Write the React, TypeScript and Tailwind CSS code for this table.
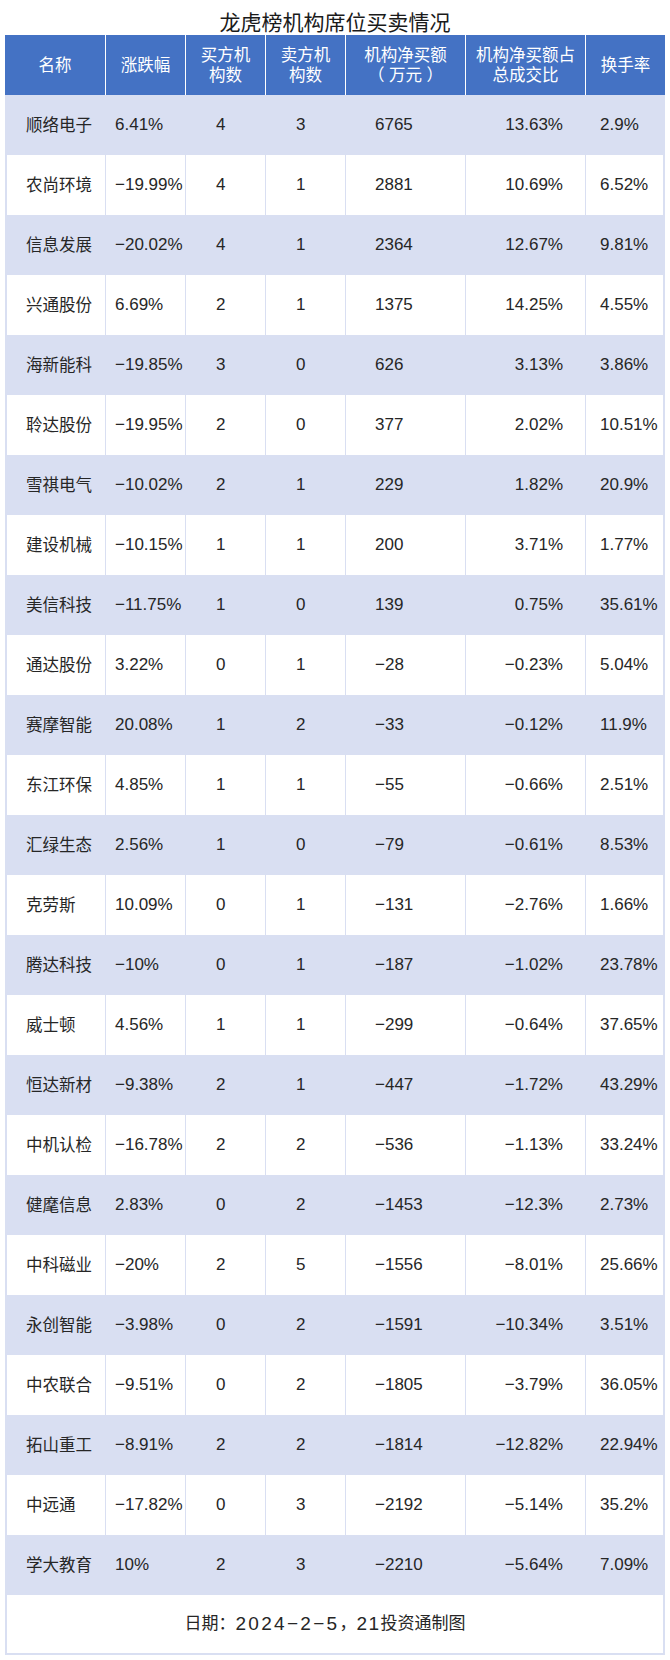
const rows: string[][] = [
  ["顺络电子", "6.41%", "4", "3", "6765", "13.63%", "2.9%"],
  ["农尚环境", "−19.99%", "4", "1", "2881", "10.69%", "6.52%"],
  ["信息发展", "−20.02%", "4", "1", "2364", "12.67%", "9.81%"],
  ["兴通股份", "6.69%", "2", "1", "1375", "14.25%", "4.55%"],
  ["海新能科", "−19.85%", "3", "0", "626", "3.13%", "3.86%"],
  ["聆达股份", "−19.95%", "2", "0", "377", "2.02%", "10.51%"],
  ["雪祺电气", "−10.02%", "2", "1", "229", "1.82%", "20.9%"],
  ["建设机械", "−10.15%", "1", "1", "200", "3.71%", "1.77%"],
  ["美信科技", "−11.75%", "1", "0", "139", "0.75%", "35.61%"],
  ["通达股份", "3.22%", "0", "1", "−28", "−0.23%", "5.04%"],
  ["赛摩智能", "20.08%", "1", "2", "−33", "−0.12%", "11.9%"],
  ["东江环保", "4.85%", "1", "1", "−55", "−0.66%", "2.51%"],
  ["汇绿生态", "2.56%", "1", "0", "−79", "−0.61%", "8.53%"],
  ["克劳斯", "10.09%", "0", "1", "−131", "−2.76%", "1.66%"],
  ["腾达科技", "−10%", "0", "1", "−187", "−1.02%", "23.78%"],
  ["威士顿", "4.56%", "1", "1", "−299", "−0.64%", "37.65%"],
  ["恒达新材", "−9.38%", "2", "1", "−447", "−1.72%", "43.29%"],
  ["中机认检", "−16.78%", "2", "2", "−536", "−1.13%", "33.24%"],
  ["健麾信息", "2.83%", "0", "2", "−1453", "−12.3%", "2.73%"],
  ["中科磁业", "−20%", "2", "5", "−1556", "−8.01%", "25.66%"],
  ["永创智能", "−3.98%", "0", "2", "−1591", "−10.34%", "3.51%"],
  ["中农联合", "−9.51%", "0", "2", "−1805", "−3.79%", "36.05%"],
  ["拓山重工", "−8.91%", "2", "2", "−1814", "−12.82%", "22.94%"],
  ["中远通", "−17.82%", "0", "3", "−2192", "−5.14%", "35.2%"],
  ["学大教育", "10%", "2", "3", "−2210", "−5.64%", "7.09%"],
];

const cols = "grid grid-cols-[100px_80px_80px_80px_120px_120px_80px]";

// per-column alignment inside data cells
const cellPos = [
  "justify-start pl-[19px] text-[16.5px] border-l-2",
  "justify-start pl-[9px] border-l",
  "justify-start pl-[30px] border-l",
  "justify-start pl-[30px] border-l",
  "justify-start pl-[29px] border-l",
  "justify-end pr-[22px] border-l",
  "justify-start pl-[14px] border-l border-r-2",
];

const headers = ["名称", "涨跌幅", "买方机\n构数", "卖方机\n构数", "机构净买额\n（ 万元 ）", "机构净买额占\n总成交比", "换手率"];

export default function App() {
  return (
    <div
      className="w-[670px] bg-white text-[#262626]"
      style={{ fontFamily: '"Liberation Sans", "Noto Sans CJK SC", sans-serif' }}
    >
      <div className="h-[35px] pt-[10px] text-center text-[21px] leading-[25px] text-[#1a1a1a]">
        龙虎榜机构席位买卖情况
      </div>

      <div className="mx-[5px] w-[660px]">
        {/* header */}
        <div className={`${cols} h-[60px] bg-[#4472c4] text-white`}>
          {headers.map((h, i) => (
            <div
              key={h}
              className={`flex items-center justify-center whitespace-pre-line text-center text-[16.5px] leading-[20px] ${
                i > 0 ? "border-l border-white" : ""
              }`}
            >
              {h}
            </div>
          ))}
        </div>

        {rows.map((r, idx) => (
          <div
            key={r[0]}
            className={`${cols} h-[60px] text-[17px] ${idx % 2 === 0 ? "bg-[#d9dff2]" : "bg-white"}`}
          >
            {r.map((v, i) => (
              <div key={i} className={`flex items-center border-[#d9dff2] ${cellPos[i]}`}>
                {v}
              </div>
            ))}
          </div>
        ))}

        {/* footer */}
        <div className="flex h-[60px] items-center justify-center border-x-2 border-b-2 border-[#d9dff2] pr-[20px] text-[17px]">
          日期：<span className="text-[19px] tracking-[2.3px]">2024−2−5</span>，
          <span className="text-[19px] tracking-[1.5px]">21</span>投资通制图
        </div>
      </div>
    </div>
  );
}
